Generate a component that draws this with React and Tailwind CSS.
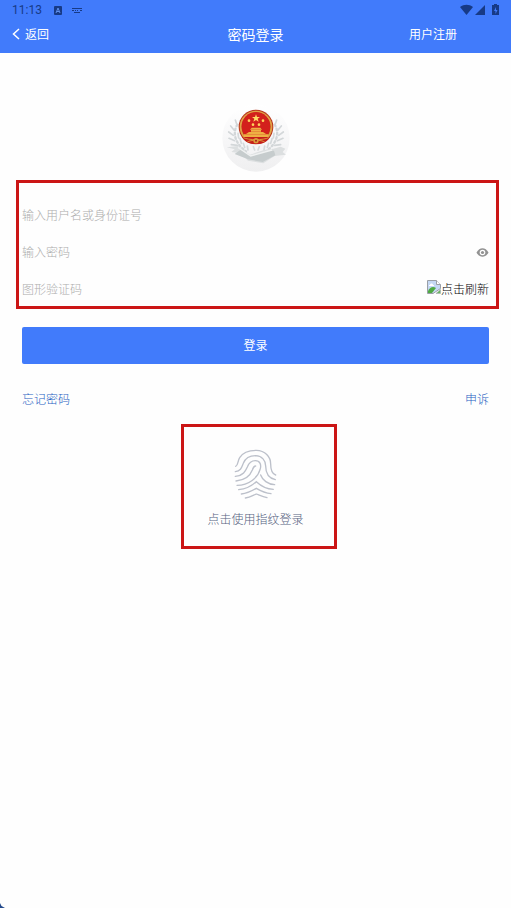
import { useState } from "react"

const Emblema = () => (
  <svg className="w-[68px] h-[68px]" viewBox="0 0 204 204" aria-hidden="true">
    <defs>
      <linearGradient id="fondo" x1="0" y1="0" x2="0" y2="1">
        <stop offset="0" stopColor="#ffffff" />
        <stop offset="0.5" stopColor="#f7f7f8" />
        <stop offset="1" stopColor="#efeff0" />
      </linearGradient>
    </defs>
    <circle cx="102" cy="102" r="101" fill="url(#fondo)" />

    {/* laureles */}
    <g fill="none" stroke="#d3d7d9" strokeWidth="7" strokeLinecap="round">
      <path d="M46 62C32 84 36 116 72 142" strokeDasharray="5 8" />
      <path d="M158 62C172 84 168 116 132 142" strokeDasharray="5 8" />
      <path d="M44 60l-4-12M36 78L26 66M34 94L20 84M38 110L21 103M46 124L28 122" strokeWidth="5" />
      <path d="M160 60l4-12M168 78l10-12M170 94l14-10M166 110l17-7M158 124l18-2" strokeWidth="5" />
      <path d="M48 88l2 14M54 104l4 14M64 118l4 12M76 126l2 12M156 88l-2 14M150 104l-4 14M140 118l-4 12M128 126l-2 12M94 128l4 10M112 128l-4 10" strokeWidth="5" stroke="#d5d9db" />
    </g>

    {/* cinta */}
    <path d="M14 130l34-4 36 26 42-14 28-4 22-6 14 6-8 10 10 8-34 4-34 22-46-8-22-22-28-4 10-8z" fill="#dcdfe0" />
    <path d="M38 150l22-16 26 22 44-14 26-2 4 14-38 20-44-8z" fill="#c6cccd" />
    <path d="M48 130l38 26 64-18" fill="none" stroke="#f0f2f2" strokeWidth="4" />

    {/* escudo */}
    <g transform="translate(0 12)">
      <circle cx="102" cy="57" r="52" fill="#b8341c" />
      <circle cx="102" cy="57" r="46" fill="none" stroke="#dfa245" strokeWidth="6" />
      <circle cx="102" cy="55" r="43" fill="#d3201c" />
      <path d="M102 19l3 8h9l-7 5 3 9-8-5-8 5 3-9-7-5h9z" fill="#ffdb66" />
      <g fill="#ffd25a">
        <circle cx="81" cy="38" r="4" />
        <circle cx="123" cy="38" r="4" />
        <circle cx="93" cy="50" r="4" />
        <circle cx="111" cy="50" r="4" />
      </g>
      <path d="M84 65l5-6h26l5 6zM87 66h30v5H87zM72 78l9-6h42l9 6zM66 79h72v8H66z" fill="#eeb043" />
      <path d="M60 87h84c-8 16-23 21-42 21s-34-5-42-21z" fill="#c51e1a" />
      <path d="M64 89c16 8 60 8 76 0M76 102c10-7 42-7 52 0" fill="none" stroke="#d9953a" strokeWidth="3" />
      <circle cx="102" cy="98" r="8" fill="#dc9b3c" />
      <circle cx="102" cy="98" r="3" fill="#a91d18" />
    </g>
  </svg>
)

const Huella = () => (
  <svg
    className="w-11 h-[50px]"
    viewBox="28 25 132 150"
    fill="none"
    stroke="#bcc0ca"
    strokeWidth="4"
    strokeLinecap="round"
    aria-hidden="true"
  >
    <path d="M33 77C41 74 38 62 45 51C54 36 74 29 95 29C121 30 138 48 138 70C138 88 141 99 153 103" />
    <path d="M32 93C49 91 51 80 56 68C62 52 76 45 93 45C112 46 123 59 123 76C123 98 134 113 152 117" />
    <path d="M32 107C56 105 62 92 68 79C73 66 81 60 92 60C106 60 110 72 107 84C100 112 72 134 37 134" />
    <path d="M34 121C65 118 77 104 83 88C86 79 89 76 93 76" />
    <path d="M108 103C113 118 130 131 150 132" />
    <path d="M42 147C64 145 80 137 95 123C109 136 126 145 146 146" />
    <path d="M50 160C69 158 83 150 95 143C107 150 121 157 139 159" />
    <path d="M62 172C76 170 87 163 95 160C103 163 114 169 127 171" />
  </svg>
)

const ImagenRota = () => (
  <svg className="w-[14px] h-4" viewBox="0 0 14 16" aria-hidden="true">
    <path d="M.5 1.500h9l4 4v4L6 14.500H.5z" fill="#c5d8f4" stroke="#9a9fa6" />
    <path d="M1 12c2-4 5-5 8-3l-4 5H1z" fill="#4faa43" />
    <path d="M3 6c0-2 3-2 3 0h1v1H2V6z" fill="#fff" />
    <path d="M9.500 1.500v4h4" fill="#fff" stroke="#9a9fa6" />
    <path d="M13.500 10.500v4H9z" fill="#6bb35f" stroke="#a8b0b8" strokeWidth=".6" />
  </svg>
)

const BarraEstado = () => (
  <div className="flex h-5 items-center justify-between px-3 text-[#173a86]">
    <div className="flex items-center">
      <span className="font-[Roboto] text-xs leading-5">11:13</span>
      <svg className="ml-3 w-2 h-[9px]" viewBox="0 0 8 9" aria-hidden="true">
        <rect width="8" height="9" rx="1" fill="currentColor" />
        <path d="M2 7l2-5 2 5M3 5.500h2" fill="none" stroke="#5f90ef" />
      </svg>
      <svg className="ml-[9px] w-3 h-[7px]" viewBox="0 0 12 7" fill="none" stroke="currentColor" aria-hidden="true">
        <path d="M1 1.500h10M1 3.500h2M4 3.500h1M6 3.500h1M9 3.500h2M3 5.500h6" />
      </svg>
    </div>
    <svg className="w-[39px] h-3" viewBox="0 0 39 12" fill="currentColor" aria-hidden="true">
      <path d="M0 3C4 0 9 0 13 3L6.500 11z" />
      <path d="M25 1v10H15z" />
      <path d="M34 0h3v1h2v10h-7V1h2z" />
      <path d="M36 3l-2 4h1.500v3l2-4H36z" fill="#417bfb" />
    </svg>
  </div>
)

const App = () => {

  const [ usuario, setUsuario ] = useState("")
  const [ password, setPassword ] = useState("")
  const [ codigo, setCodigo ] = useState("")
  const [ visible, setVisible ] = useState(false)

  const campo = "min-w-0 flex-1 bg-transparent text-xs leading-6 text-[#333] outline-none placeholder:text-[#adadad]"

  return (
    <div className="flex min-h-screen flex-col bg-[#fefefe] font-['Noto_Sans_CJK_SC',sans-serif] text-xs font-light">
      <header className="bg-[#417bfb] font-normal text-white">
        <BarraEstado />
        <nav className="grid h-[33px] grid-cols-3 items-start">
          <a href="#volver" className="flex items-center pl-3 leading-7">
            <svg className="mr-[5px] w-2 h-3" viewBox="0 0 8 12" fill="none" stroke="currentColor" strokeWidth="1.5" aria-hidden="true">
              <path d="M7 1L1.500 6 7 11" />
            </svg>
            返回
          </a>
          <h1 className="text-center text-sm leading-7">密码登录</h1>
          <a href="#registrar" className="pr-[54px] text-right leading-7">用户注册</a>
        </nav>
      </header>

      <main className="flex flex-col pt-[51px]">
        <div className="flex justify-center">
          <Emblema />
        </div>

        <form className="mt-2" onSubmit={ (e) => e.preventDefault() }>
          <div className="ml-4 mr-3 flex flex-col gap-[13px] border-3 border-[#cb1515] pl-[3px] pr-[7px] pt-5 pb-[5px]">
            <div className="flex h-6 items-center">
              <input
                type="text"
                aria-label="输入用户名或身份证号"
                placeholder="输入用户名或身份证号"
                className={campo}
                value={usuario}
                onChange={ (e) => setUsuario(e.target.value) }
              />
            </div>
            <div className="flex h-6 items-center">
              <input
                type={ visible ? "text" : "password" }
                aria-label="输入密码"
                placeholder="输入密码"
                className={campo}
                value={password}
                onChange={ (e) => setPassword(e.target.value) }
              />
              <button type="button" aria-label="显示密码" className="cursor-pointer" onClick={ () => setVisible(!visible) }>
                <svg className="w-[13px] h-[9px]" viewBox="0 0 12 9" aria-hidden="true">
                  <path d="M0 4.500C3-1.200 9-1.200 12 4.500C9 10.200 3 10.200 0 4.500z" fill="#929292" />
                  <circle cx="6" cy="4.500" r="2.800" fill="#fff" />
                  <circle cx="6" cy="4.500" r="1.600" fill="#929292" />
                </svg>
              </button>
            </div>
            <div className="flex h-6 items-center">
              <input
                type="text"
                aria-label="图形验证码"
                placeholder="图形验证码"
                className={campo}
                value={codigo}
                onChange={ (e) => setCodigo(e.target.value) }
              />
              <button type="button" className="flex cursor-pointer items-start leading-6 text-black">
                <span className="pt-[2px]"><ImagenRota /></span>
                点击刷新
              </button>
            </div>
          </div>

          <div className="mt-[18px] px-[22px]">
            <button type="submit" className="h-[37px] w-full cursor-pointer rounded-xs bg-[#417bfb] pb-[2px] font-normal text-white">
              登录
            </button>
          </div>
        </form>

        <div className="mt-[23px] flex justify-between px-[22px] leading-6 text-[#1f5fc2]">
          <a href="#olvide">忘记密码</a>
          <a href="#apelar">申诉</a>
        </div>

        <div className="mt-[13px] flex justify-center pl-[7px]">
          <button
            type="button"
            className="flex h-[125px] w-[156px] cursor-pointer flex-col items-center border-3 border-[#cb1515] pt-[22px] pr-[7px] text-[#566280]"
          >
            <Huella />
            <span className="mt-2 leading-6">点击使用指纹登录</span>
          </button>
        </div>
      </main>

      {/* esquina inferior */}
      <div className="mt-auto h-[5px] w-[5px] bg-[#234a8c] [clip-path:polygon(0_0,30%_60%,100%_100%,0_100%)]" />
    </div>
  )
}

export default App
